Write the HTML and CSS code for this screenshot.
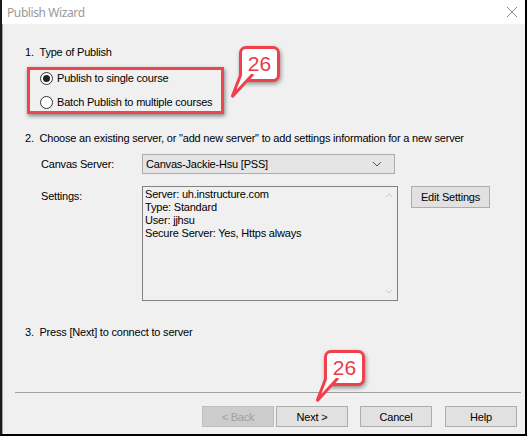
FILE: index.html
```html
<!DOCTYPE html>
<html lang="en">

<head>
    <meta charset="utf-8" />
    <title>Publish Wizard</title>
    <link rel="stylesheet" href="styles.css">
</head>

<body>
    <div class="window">
        <div class="titlebar">
            <span class="title">Publish Wizard</span>
            <svg class="close" width="12" height="12" viewBox="0 0 12 12">
                <path d="M1 1 L11 11 M11 1 L1 11" stroke="#8a8a8a" stroke-width="1" fill="none" />
            </svg>
        </div>

        <div class="content">
            <div class="step">1.&nbsp;&nbsp;Type of Publish</div>

            <div class="mark-box">
                <label class="radio-row">
                    <span class="radio checked"></span>
                    Publish to single course
                </label>
                <label class="radio-row">
                    <span class="radio"></span>
                    Batch Publish to multiple courses
                </label>
            </div>

            <div class="step step-two">2.&nbsp;&nbsp;Choose an existing server, or "add new server" to add settings information for a new server</div>

            <div class="field-row server-row">
                <span class="field-label">Canvas Server:</span>
                <div class="combo">
                    <span>Canvas-Jackie-Hsu [PSS]</span>
                    <svg width="10" height="6" viewBox="0 0 10 6">
                        <path d="M1 1 L5 5 L9 1" stroke="#555" stroke-width="1" fill="none" />
                    </svg>
                </div>
            </div>

            <div class="field-row settings-row">
                <span class="field-label">Settings:</span>
                <div class="textbox">
                    <div class="textbox-text">
                        Server: uh.instructure.com<br>
                        Type: Standard<br>
                        User: jjhsu<br>
                        Secure Server: Yes, Https always
                    </div>
                    <div class="scrollbar">
                        <svg width="8" height="5" viewBox="0 0 8 5">
                            <path d="M1 4 L4 1 L7 4" stroke="#c8c8c8" stroke-width="1" fill="none" />
                        </svg>
                        <svg width="8" height="5" viewBox="0 0 8 5">
                            <path d="M1 1 L4 4 L7 1" stroke="#c8c8c8" stroke-width="1" fill="none" />
                        </svg>
                    </div>
                </div>
                <button class="btn edit-btn">Edit Settings</button>
            </div>

            <div class="step step-three">3.&nbsp;&nbsp;Press [Next] to connect to server</div>

            <div class="separator"></div>

            <div class="buttons">
                <button class="btn disabled">&lt; Back</button>
                <button class="btn">Next &gt;</button>
                <button class="btn gap-left">Cancel</button>
                <button class="btn gap-left wide-gap">Help</button>
            </div>
        </div>

        <div class="callout callout-top">
            <span>26</span>
            <svg class="tail" width="24" height="26" viewBox="0 0 24 26">
                <path d="M10 0 L1 23 L22 0" fill="#fff" stroke="#f0404c" stroke-width="3" stroke-linejoin="miter" />
            </svg>
        </div>
        <div class="callout callout-bottom">
            <span>26</span>
            <svg class="tail" width="24" height="26" viewBox="0 0 24 26">
                <path d="M10 0 L1 23 L22 0" fill="#fff" stroke="#f0404c" stroke-width="3" stroke-linejoin="miter" />
            </svg>
        </div>
    </div>
</body>

</html>
```

FILE: styles.css
```css
body {
    margin: 0;
    background-color: #f0f0f0;
    font-family: "Liberation Sans", Arial, sans-serif;
    font-size: 11px;
    letter-spacing: -0.2px;
    color: #000;
}

.window {
    position: relative;
    width: 527px;
    height: 436px;
    box-sizing: border-box;
    border-left: 2px solid #1a1a1a;
    border-right: 2px solid #000;
    border-bottom: 2px solid #000;
    background-color: #f0f0f0;
    display: flex;
    flex-direction: column;
}

.titlebar {
    height: 24px;
    background-color: #fff;
    display: flex;
    align-items: center;
    justify-content: space-between;
    padding: 0 7px 0 5px;
    flex-shrink: 0;
}

.title {
    font-family: "Noto Sans", "Open Sans", sans-serif;
    font-size: 12px;
    letter-spacing: -0.4px;
    color: #999;
}

.content {
    flex: 1;
    display: flex;
    flex-direction: column;
    padding: 22px 0 0 0;
    border-left: 1px solid #a0a0a0;
}

.content > * {
    flex-shrink: 0;
}

.step {
    margin-left: 22px;
    line-height: 13px;
}

.mark-box {
    margin: 8px 0 0 24px;
    width: 181px;
    height: 39px;
    border: 3px solid #ef4550;
    box-shadow: 1px 2px 4px rgba(0, 0, 0, 0.45);
    display: flex;
    flex-direction: column;
    gap: 11px;
    padding: 2px 0 0 10px;
}

.radio-row {
    display: flex;
    align-items: center;
    gap: 4px;
    line-height: 13px;
}

.radio {
    width: 13px;
    height: 13px;
    border: 1px solid #333;
    border-radius: 50%;
    background-color: #fff;
    box-sizing: border-box;
    position: relative;
}

.radio.checked::after {
    content: "";
    position: absolute;
    left: 2px;
    top: 2px;
    width: 7px;
    height: 7px;
    border-radius: 50%;
    background-color: #222;
}

.step-two {
    margin-top: 18px;
}

.field-row {
    display: flex;
    margin-left: 38px;
}

.server-row {
    margin-top: 9px;
}

.field-label {
    width: 101px;
    line-height: 20px;
}

.combo {
    width: 253px;
    height: 20px;
    box-sizing: border-box;
    border: 1px solid #adadad;
    background-color: #e5e5e5;
    display: flex;
    align-items: center;
    justify-content: space-between;
    padding: 0 12px 0 3px;
}

.settings-row {
    margin-top: 12px;
}

.textbox {
    width: 256px;
    height: 115px;
    box-sizing: border-box;
    border: 1px solid #828282;
    background-color: #f0f0f0;
    display: flex;
}

.textbox-text {
    flex: 1;
    padding: 1px 2px;
    line-height: 13px;
}

.scrollbar {
    width: 17px;
    display: flex;
    flex-direction: column;
    justify-content: space-between;
    align-items: center;
    padding: 6px 0;
}

.btn {
    font-family: "Liberation Sans", Arial, sans-serif;
    font-size: 11px;
    letter-spacing: -0.2px;
    color: #000;
    background-color: #e1e1e1;
    border: 1px solid #adadad;
    width: 79px;
    height: 22px;
    padding: 0;
}

.edit-btn {
    margin-left: 13px;
}

.step-three {
    margin-top: 25px;
}

.separator {
    margin: 53px 4px 0 12px;
    border-top: 1px solid #a0a0a0;
}

.buttons {
    display: flex;
    justify-content: flex-end;
    padding: 13px 8px 0 0;
}

.buttons .btn {
    width: 72px;
    height: 21px;
    margin-left: 2px;
}

.buttons .btn.gap-left {
    margin-left: 12px;
}

.buttons .btn.wide-gap {
    margin-left: 13px;
}

.btn.disabled {
    color: #a0a0a0;
    background-color: #cccccc;
    border-color: #bfbfbf;
}

.callout {
    position: absolute;
    width: 35px;
    height: 30px;
    background-color: #fff;
    border: 3px solid #f0404c;
    border-radius: 7px;
    box-shadow: 1px 2px 4px rgba(0, 0, 0, 0.4);
    display: flex;
    align-items: center;
    justify-content: center;
    font-family: "Liberation Sans", Arial, sans-serif;
    font-size: 21px;
    letter-spacing: 0;
    color: #ec3a45;
}

.callout-top {
    left: 237px;
    top: 46px;
}

.callout-bottom {
    left: 322px;
    top: 350px;
}

.tail {
    position: absolute;
    left: -11px;
    top: 25px;
}
```
